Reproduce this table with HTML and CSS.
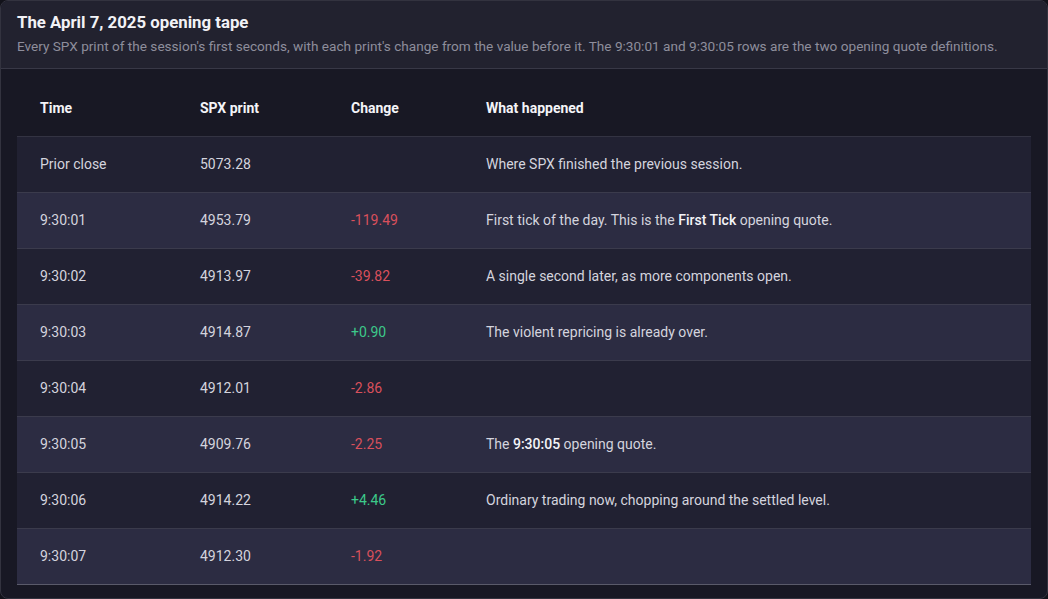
FILE: index.html
```html
<!DOCTYPE html>
<html>
<head>
<meta charset="utf-8">
<link rel="stylesheet" href="styles.css">
</head>
<body>
<div class="card">
  <div class="card-head">
    <h1 class="title">The April 7, 2025 opening tape</h1>
    <p class="subtitle">Every SPX print of the session's first seconds, with each print's change from the value before it. The 9:30:01 and 9:30:05 rows are the two opening quote definitions.</p>
  </div>
  <div class="card-body">
    <table class="tape">
      <colgroup><col class="c-time"><col class="c-print"><col class="c-chg"><col class="c-note"></colgroup>
      <thead>
        <tr><th>Time</th><th>SPX print</th><th>Change</th><th>What happened</th></tr>
      </thead>
      <tbody>
        <tr><td>Prior close</td><td>5073.28</td><td></td><td>Where SPX finished the previous session.</td></tr>
        <tr><td>9:30:01</td><td>4953.79</td><td class="neg">-119.49</td><td>First tick of the day. This is the <strong>First Tick</strong> opening quote.</td></tr>
        <tr><td>9:30:02</td><td>4913.97</td><td class="neg">-39.82</td><td>A single second later, as more components open.</td></tr>
        <tr><td>9:30:03</td><td>4914.87</td><td class="pos">+0.90</td><td>The violent repricing is already over.</td></tr>
        <tr><td>9:30:04</td><td>4912.01</td><td class="neg">-2.86</td><td></td></tr>
        <tr><td>9:30:05</td><td>4909.76</td><td class="neg">-2.25</td><td>The <strong>9:30:05</strong> opening quote.</td></tr>
        <tr><td>9:30:06</td><td>4914.22</td><td class="pos">+4.46</td><td>Ordinary trading now, chopping around the settled level.</td></tr>
        <tr><td>9:30:07</td><td>4912.30</td><td class="neg">-1.92</td><td></td></tr>
      </tbody>
    </table>
  </div>
</div>
</body>
</html>
```
FILE: styles.css
```css
* { box-sizing: border-box; }
html, body { margin: 0; padding: 0; background: #12121a; }
body {
  font-family: Roboto, "Liberation Sans", sans-serif;
  width: 1048px;
  height: 599px;
  overflow: hidden;
}
.card {
  width: 1048px;
  height: 599px;
  border: 1px solid #33333f;
  border-radius: 8px;
  background: #181824;
  overflow: hidden;
}
.card-head {
  background: #22222f;
  border-bottom: 1px solid #383846;
  height: 68px;
  padding: 11px 16px 0 16px;
}
.title {
  margin: 0;
  font-size: 16.8px;
  font-weight: 700;
  color: #f2f2f6;
  line-height: 20px;
}
.subtitle {
  margin: 6px 0 0 0;
  font-size: 13.6px;
  color: #8e8e9c;
  line-height: 16px;
  white-space: nowrap;
}
.card-body {
  padding: 11px 16px 0 16px;
}
.tape {
  width: 1014px;
  table-layout: fixed;
  border-collapse: collapse;
  font-size: 14px;
  color: #d4d4de;
}
.c-time { width: 160px; }
.c-print { width: 151px; }
.c-chg { width: 135px; }
.c-note { width: 568px; }
.tape th {
  text-align: left;
  font-weight: 700;
  color: #f4f4f8;
  height: 56px;
  padding: 0 0 0 23px;
  border-bottom: 1px solid #333342;
}
.tape td {
  height: 56px;
  padding: 0 0 0 23px;
  border-bottom: 1px solid #3b3b4c;
}
.tape tbody tr:nth-child(odd) { background: #212132; }
.tape tbody tr:nth-child(even) { background: #2c2c42; }
.tape tbody tr:last-child td { border-bottom-color: #5a5a6a; }
.tape strong { color: #f4f4f8; font-weight: 500; }
.neg { color: #d9505c; }
.pos { color: #3cc98a; }
```
